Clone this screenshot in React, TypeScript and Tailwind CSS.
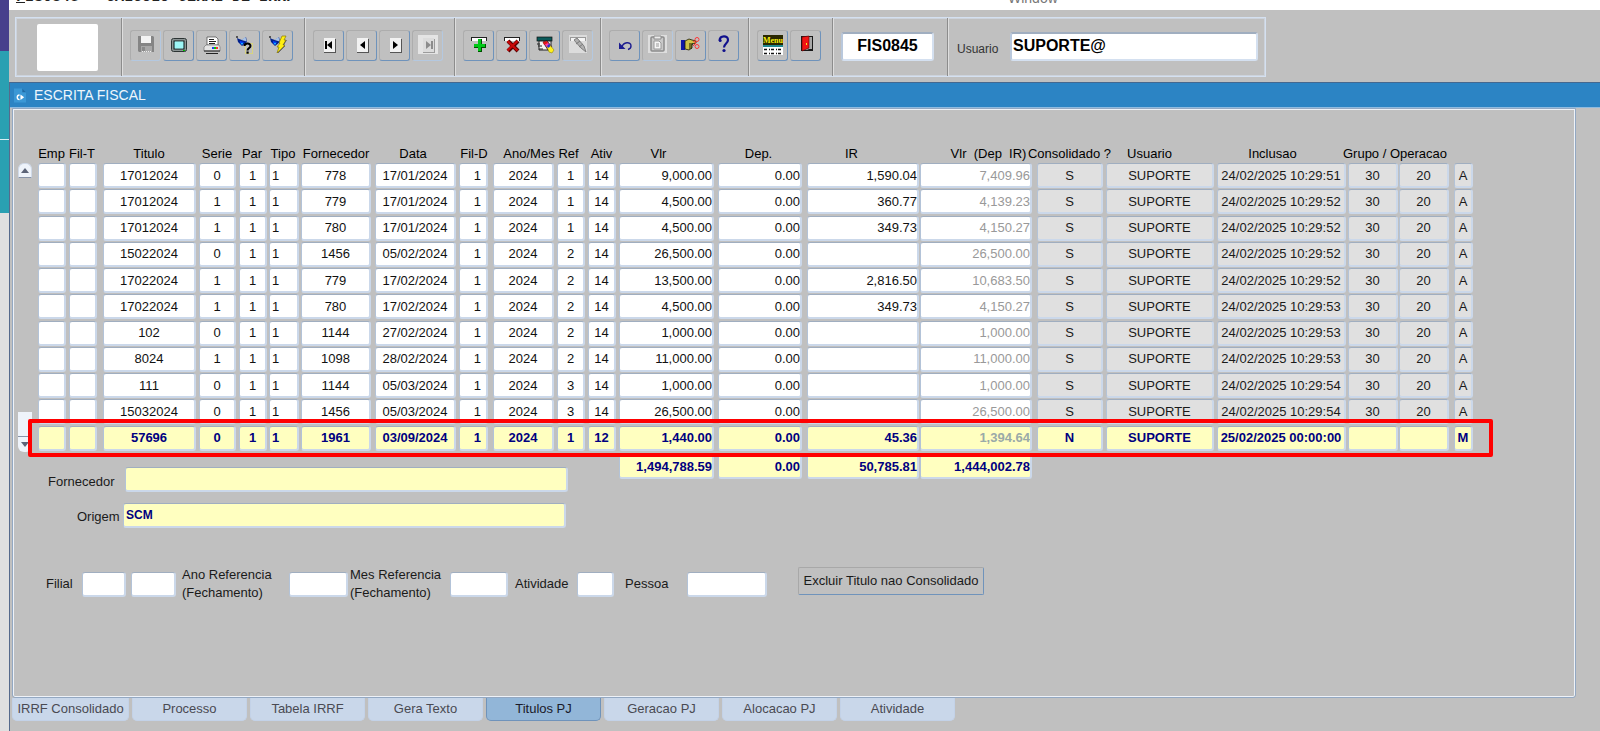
import React from 'react';

type Align = 'center' | 'left' | 'right' | 'inset';

interface Column {
  label: string;
  col: string;
  field: string;
  align: Align;
  head?: string;
  tone?: 'muted' | 'locked';
}

const columns: Column[] = [
  { label: 'Emp', col: 'w-[31px]', field: 'w-[28px]', align: 'center' },
  { label: 'Fil-T', col: 'w-[34px]', field: 'w-[28px]', align: 'center', head: 'pr-2' },
  { label: 'Titulo', col: 'w-[96px]', field: 'w-[93px]', align: 'center' },
  { label: 'Serie', col: 'w-[40px]', field: 'w-[37px]', align: 'center' },
  { label: 'Par', col: 'w-[30px]', field: 'w-[28px]', align: 'center' },
  { label: 'Tipo', col: 'w-[32px]', field: 'w-[30px]', align: 'left' },
  { label: 'Fornecedor', col: 'w-[74px]', field: 'w-[70px]', align: 'center' },
  { label: 'Data', col: 'w-[84px]', field: 'w-[81px]', align: 'center', head: 'pr-2' },
  { label: 'Fil-D', col: 'w-[34px]', field: 'w-[29px]', align: 'inset' },
  { label: 'Ano/Mes', col: 'w-[64px]', field: 'w-[61px]', align: 'center', head: 'pl-2' },
  { label: 'Ref', col: 'w-[31px]', field: 'w-[28px]', align: 'center', head: 'pr-2' },
  { label: 'Ativ', col: 'w-[31px]', field: 'w-[28px]', align: 'center' },
  { label: 'Vlr', col: 'w-[99px]', field: 'w-[95px]', align: 'right', head: 'pr-5' },
  { label: 'Dep.', col: 'w-[89px]', field: 'w-[84px]', align: 'right', head: 'pr-2' },
  { label: 'IR', col: 'w-[113px]', field: 'w-[112px]', align: 'right', head: 'pr-6' },
  { label: 'Vlr  (Dep  IR)', col: 'w-[117px]', field: 'w-[112px]', align: 'right', tone: 'muted', head: 'pl-5' },
  { label: 'Consolidado ?', col: 'w-[69px]', field: 'w-[66px]', align: 'center', tone: 'locked' },
  { label: 'Usuario', col: 'w-[111px]', field: 'w-[108px]', align: 'center', tone: 'locked', head: 'pr-6' },
  { label: 'Inclusao', col: 'w-[131px]', field: 'w-[129px]', align: 'center', tone: 'locked', head: 'pr-5' },
  { label: 'Grupo', col: 'w-[51px]', field: 'w-[50px]', align: 'center', tone: 'locked' },
  { label: 'Operacao', col: 'w-[55px]', field: 'w-[50px]', align: 'center', tone: 'locked' },
  { label: 'Origem', col: 'w-[19px]', field: 'w-[19px]', align: 'center', tone: 'locked' },
];

const base: string[][] = [
  ['17012024', '0', '778', '17/01/2024', '1', '14', '9,000.00', '1,590.04', '7,409.96', '24/02/2025 10:29:51'],
  ['17012024', '1', '779', '17/01/2024', '1', '14', '4,500.00', '360.77', '4,139.23', '24/02/2025 10:29:52'],
  ['17012024', '1', '780', '17/01/2024', '1', '14', '4,500.00', '349.73', '4,150.27', '24/02/2025 10:29:52'],
  ['15022024', '0', '1456', '05/02/2024', '2', '14', '26,500.00', '', '26,500.00', '24/02/2025 10:29:52'],
  ['17022024', '1', '779', '17/02/2024', '2', '14', '13,500.00', '2,816.50', '10,683.50', '24/02/2025 10:29:52'],
  ['17022024', '1', '780', '17/02/2024', '2', '14', '4,500.00', '349.73', '4,150.27', '24/02/2025 10:29:53'],
  ['102', '0', '1144', '27/02/2024', '2', '14', '1,000.00', '', '1,000.00', '24/02/2025 10:29:53'],
  ['8024', '1', '1098', '28/02/2024', '2', '14', '11,000.00', '', '11,000.00', '24/02/2025 10:29:53'],
  ['111', '0', '1144', '05/03/2024', '3', '14', '1,000.00', '', '1,000.00', '24/02/2025 10:29:54'],
  ['15032024', '0', '1456', '05/03/2024', '3', '14', '26,500.00', '', '26,500.00', '24/02/2025 10:29:54'],
  ['57696', '0', '1961', '03/09/2024', '1', '12', '1,440.00', '45.36', '1,394.64', '25/02/2025 00:00:00'],
];

const rows: string[][] = base.map((r, i) => {
  const current = i === base.length - 1;
  return [
    '', '', r[0], r[1], '1', '1', r[2], r[3], '1', '2024', r[4], r[5], r[6], '0.00', r[7], r[8],
    current ? 'N' : 'S', 'SUPORTE', r[9], current ? '' : '30', current ? '' : '20', current ? 'M' : 'A',
  ];
});

const totals = [
  { label: 'Total Vlr', value: '1,494,788.59', field: 'w-[95px]' },
  { label: 'Total Dep.', value: '0.00', field: 'w-[84px]' },
  { label: 'Total IR', value: '50,785.81', field: 'w-[112px]' },
  { label: 'Total Vlr (Dep IR)', value: '1,444,002.78', field: 'w-[112px]' },
];

const tabs = ['IRRF Consolidado', 'Processo', 'Tabela IRRF', 'Gera Texto', 'Titulos PJ', 'Geracao PJ', 'Alocacao PJ', 'Atividade'];

const fieldBase =
  'block h-[25px] rounded-[3px] border border-r-2 border-b-2 border-t-[#a0aec0] border-l-[#b3c3d8] border-r-[#cbd8ea] border-b-[#cbd8ea] outline-none';

const alignClass: Record<Align, string> = {
  center: 'text-center',
  left: 'text-left pl-[2px]',
  right: 'text-right',
  inset: 'text-right pr-[5px]',
};

function cellColor(tone: Column['tone'], current: boolean): string {
  if (current) return tone === 'muted' ? 'bg-[#ffffc0] text-[#9aaaa8] font-bold' : 'bg-[#ffffc0] text-[#000080] font-bold';
  if (tone === 'muted') return 'bg-white text-[#999999]';
  if (tone === 'locked') return 'bg-[#e0e0e0] text-[#1a1a1a]';
  return 'bg-white text-[#111111]';
}

/* ---------- toolbar icons (20 x 20) ---------- */

function Icon({ children }: { children: React.ReactNode }) {
  return (
    <svg width="20" height="20" viewBox="0 0 20 20" aria-hidden="true">
      {children}
    </svg>
  );
}

const SaveIcon = () => (
  <Icon>
    <path d="M2 1h15l1 1v15H3l-1-1z" fill="#858585" />
    <rect x="5" y="1" width="10" height="7" fill="#f4f4f4" />
    <rect x="5" y="11" width="11" height="6" fill="#a8a8a8" />
    <path d="M6 16.500h10" stroke="#ececec" strokeDasharray="1 1" />
    <rect x="6" y="12" width="3" height="4" fill="#8a8a8a" />
  </Icon>
);

const ScreenIcon = () => (
  <Icon>
    <rect x="2.500" y="3.500" width="15" height="13" rx="2" fill="#8b9494" stroke="#2c3434" />
    <rect x="5" y="6" width="10" height="8" fill="#8ff3f3" stroke="#101818" />
    <path d="M7 6v8M9 6v8M11 6v8M13 6v8" stroke="#c8ffff" strokeWidth=".5" />
    <rect x="14" y="15" width="2" height="1" fill="#00c000" />
  </Icon>
);

const PrintIcon = () => (
  <Icon>
    <path d="M5 10V2h9l2 2v6z" fill="#fff" stroke="#444" strokeWidth=".7" />
    <path d="M7 4.500h5M7 6.500h7M7 8.500h6" stroke="#222" />
    <path d="M4 10h13l1 2v4H2v-4z" fill="#e4e4e4" stroke="#666" strokeWidth=".6" />
    <path d="M2 15.500h16v1H2zM4 18h12v1H4z" fill="#222" />
    <rect x="10" y="12" width="2" height="2" fill="#2040ff" />
    <rect x="12" y="12" width="2" height="2" fill="#00d000" />
    <rect x="14" y="12" width="2" height="2" fill="#ff3030" />
  </Icon>
);

const Torch = () => (
  <>
    <path d="M2 3l2 1 3 1 4-3 1 5-5 4-4-4z" fill="#00208c" />
    <path d="M6.500 5l4-3 1.200 4.500z" fill="#a8c4e8" />
    <path d="M5 6l4 1-2 3-2-2z" fill="#0040ff" />
    <path d="M6 8h2l-1 2z" fill="#20d8ff" />
    <path d="M1 1h2v2H1z" fill="#555" />
  </>
);

const EnterQueryIcon = () => (
  <Icon>
    <Torch />
    <path d="M10.500 8.500h7v10h-7z" fill="none" stroke="#f0e840" strokeDasharray="1 1" />
    <path d="M9.500 11c0-3 6-3.500 6 0 0 2-3 2-3 4.500" fill="none" stroke="#000" strokeWidth="2" />
    <rect x="11.500" y="16.500" width="2.200" height="2.200" fill="#000" />
  </Icon>
);

const RunQueryIcon = () => (
  <Icon>
    <Torch />
    <path d="M14 1h4l-2 4h2l-3 5h2l-8 8 2-6H9l3-4h-1z" fill="#ffef10" stroke="#8a7a00" strokeWidth=".7" />
    <path d="M18.500 5l-3 5M17 11l-7 7" stroke="#444" strokeWidth=".7" />
  </Icon>
);

function NavIcon({ bar, dir, off = false }: { bar?: boolean; dir: 'l' | 'r'; off?: boolean }) {
  const ink = off ? '#8c8c8c' : '#000';
  return (
    <Icon>
      {off && <rect x="0" y="0" width="20" height="19" fill="#e4e4e4" />}
      <path d="M5 17h11V4h1v14H5z" fill={off ? '#9c9c9c' : '#555'} />
      <rect x="5" y="3" width="11" height="14" fill={off ? '#dcdcdc' : '#f2f2f2'} />
      {dir === 'l' ? <path d="M13 6v8l-5-4z" fill={ink} /> : <path d="M8 6v8l5-4z" fill={ink} />}
      {bar && <rect x={dir === 'l' ? 6 : 13} y="6" width="2" height="8" fill={ink} />}
    </Icon>
  );
}

const RecordBar = () => (
  <>
    <rect x="2" y="2" width="16" height="4" fill="#222" />
    <rect x="3" y="3" width="14" height="3" fill="#fff" />
  </>
);

const InsertIcon = () => (
  <Icon>
    <RecordBar />
    <path d="M9 4h4v5h4v4h-4v4H9v-4H5V9h4z" fill="#005000" />
    <path d="M9 4h3v5h4v3h-4v4H9v-4H5V9h4z" fill="#00c818" />
  </Icon>
);

const DeleteIcon = () => (
  <Icon>
    <RecordBar />
    <path d="M6 6l10 10M16 6L6 16" stroke="#5a0000" strokeWidth="4" />
    <path d="M5.500 6l10 9.500M15.500 6l-10 9.500" stroke="#c80808" strokeWidth="2.400" />
  </Icon>
);

const ClearRecordIcon = () => (
  <Icon>
    <rect x="2" y="2" width="15" height="4" fill="#0a5a5a" stroke="#111" strokeWidth=".7" />
    <path d="M4 6h12v9H4z" fill="#f4f4f4" stroke="#222" />
    <path d="M2 9h3M3 11h4M4 14h4" stroke="#222" />
    <path d="M8 7l4-1 5 6-4 3z" fill="#ff3fa8" stroke="#111" strokeWidth=".8" />
    <path d="M8 7l4-1 1 2-4 2z" fill="#e01818" />
    <path d="M12 12l3-2 4 5-2 3-3-1z" fill="#fff01c" stroke="#7c7400" strokeWidth=".5" />
    <path d="M12 11l2-2 1.500 2-2 2z" fill="#2430d8" />
  </Icon>
);

const EraseOffIcon = () => (
  <Icon>
    <rect x="1" y="0" width="18" height="18" fill="#dcdcdc" />
    <rect x="2" y="2" width="16" height="4" fill="#9a9a9a" />
    <rect x="3" y="3" width="14" height="3" fill="#f4f4f4" />
    <path d="M6 5l3-2 7 8 2 6-5-4z" fill="#b0b0b0" stroke="#808080" />
    <path d="M8 9l4-3M11 12l4-3" stroke="#777" />
  </Icon>
);

const UndoIcon = () => (
  <Icon>
    <path d="M7 12c1-5 9-6 9-1 0 2-1 3-3 3.500" fill="none" stroke="#1c1c90" strokeWidth="1.400" />
    <path d="M4 7.500v6.500h6.500z" fill="#1c1c90" />
  </Icon>
);

const PasteIcon = () => (
  <Icon>
    <rect x="0" y="0" width="19" height="18" fill="#dedede" />
    <rect x="3" y="2" width="13" height="14" rx="1" fill="#c9c9c9" stroke="#8c8c8c" strokeWidth="1.500" />
    <path d="M6 1h7v3H6z" fill="#ededed" stroke="#8c8c8c" />
    <path d="M6 6h5l2 2v6H6z" fill="#f6f6f6" stroke="#999" />
    <path d="M8 9h3M8 11h3" stroke="#999" />
  </Icon>
);

const HandIcon = () => (
  <Icon>
    <rect x="0" y="5" width="4" height="10" fill="#1018a8" />
    <path d="M4 6l4-2 3 1 4 1v2l-4 1v4l-3 2-4-1z" fill="#cfc34a" stroke="#1a1800" strokeWidth=".8" />
    <path d="M8 9h4M8 11h3M8 13h3" stroke="#1a1800" />
    <circle cx="16" cy="4.500" r="2" fill="none" stroke="#ff3434" />
    <circle cx="16" cy="11.500" r="2" fill="none" stroke="#ff3434" />
    <path d="M12 6l3 2-3 3" fill="none" stroke="#ff3434" />
  </Icon>
);

const HelpIcon = () => (
  <Icon>
    <path d="M5.500 5.500C6 0 14 0 14 5c0 3.500-4 3.500-4 7.500" fill="none" stroke="#10108c" strokeWidth="2.200" />
    <circle cx="6.200" cy="5.500" r="1.500" fill="#10108c" />
    <circle cx="10" cy="15.500" r="1.600" fill="#10108c" />
  </Icon>
);

const MenuIcon = () => (
  <Icon>
    <rect x="0" y="0" width="20" height="10" fill="#2a2800" />
    <text x="10" y="8" textAnchor="middle" fontSize="8" fontWeight="700" fill="#f6ee10" fontFamily="Liberation Serif, serif">
      Menu
    </text>
    <rect x="0" y="10" width="20" height="2" fill="#208890" />
    <rect x="0" y="12" width="20" height="8" fill="#fff" />
    <path d="M1 14.500h18M1 18.500h18" stroke="#111" strokeWidth="1.500" strokeDasharray="3 2 1 1" />
  </Icon>
);

const ExitIcon = () => (
  <Icon>
    <rect x="5.500" y="1.500" width="11" height="14" fill="#a8a8a8" stroke="#181818" />
    <path d="M6 2l7-1v12l-7 3z" fill="#f01414" stroke="#5c0000" strokeWidth=".6" />
    <rect x="10" y="8" width="1" height="2" fill="#ffe820" />
    <path d="M13 14h4v2H9z" fill="#181818" />
  </Icon>
);

interface Tool {
  name: string;
  icon: React.ReactNode;
  off?: boolean;
}

const groups: { width: string; tools: Tool[] }[] = [
  {
    width: 'w-[183px]',
    tools: [
      { name: 'Salvar', icon: <SaveIcon />, off: true },
      { name: 'Tela', icon: <ScreenIcon /> },
      { name: 'Imprimir', icon: <PrintIcon /> },
      { name: 'Entrar consulta', icon: <EnterQueryIcon /> },
      { name: 'Executar consulta', icon: <RunQueryIcon /> },
    ],
  },
  {
    width: 'w-[150px]',
    tools: [
      { name: 'Primeiro', icon: <NavIcon dir="l" bar /> },
      { name: 'Anterior', icon: <NavIcon dir="l" /> },
      { name: 'Proximo', icon: <NavIcon dir="r" /> },
      { name: 'Ultimo', icon: <NavIcon dir="r" bar off />, off: true },
    ],
  },
  {
    width: 'w-[146px]',
    tools: [
      { name: 'Inserir', icon: <InsertIcon /> },
      { name: 'Excluir', icon: <DeleteIcon /> },
      { name: 'Limpar registro', icon: <ClearRecordIcon /> },
      { name: 'Apagar', icon: <EraseOffIcon />, off: true },
    ],
  },
  {
    width: 'w-[148px]',
    tools: [
      { name: 'Desfazer', icon: <UndoIcon /> },
      { name: 'Colar', icon: <PasteIcon />, off: true },
      { name: 'Recortar', icon: <HandIcon /> },
      { name: 'Ajuda', icon: <HelpIcon /> },
    ],
  },
  {
    width: 'w-[84px]',
    tools: [
      { name: 'Menu', icon: <MenuIcon /> },
      { name: 'Sair', icon: <ExitIcon /> },
    ],
  },
];

const divider = 'border-r border-r-[#8c8c8c] shadow-[1px_0_0_#dedede]';

function Toolbar() {
  return (
    <div className="flex h-[60px] w-max items-stretch border border-[#d4e0f0] shadow-[inset_0_0_0_1px_#cdd3dc]">
      <div className={'flex w-[106px] justify-center pt-[6px] pr-[3px] ' + divider}>
        <div className="h-[47px] w-[61px] rounded-[2px] bg-white" />
      </div>
      {groups.map((g) => (
        <div key={g.width} className={'flex items-center gap-[2px] pb-[4px] pl-[8px] ' + g.width + ' ' + divider}>
          {g.tools.map((t) => (
            <button
              key={t.name}
              type="button"
              aria-label={t.name}
              disabled={t.off}
              className={
                'flex h-[31px] w-[31px] items-center justify-center rounded-[3px] border border-t-[#adadad] border-l-[#adadad] ' +
                (t.off ? 'border-r-[#b4c8e0] border-b-[#b4c8e0]' : 'border-r-[#6f93bb] border-b-[#6f93bb]')
              }
            >
              {t.icon}
            </button>
          ))}
        </div>
      ))}
      <div className={'flex w-[115px] items-center pb-[2px] pl-[8px] ' + divider}>
        <input
          aria-label="Programa"
          readOnly
          value="FIS0845"
          className="h-[29px] w-[93px] rounded-[3px] border-2 border-t-[#a0aec0] border-l-[#b9c8dc] border-r-[#d4e0f0] border-b-[#d4e0f0] bg-white text-center text-[16px] font-bold text-black outline-none"
        />
      </div>
      <div className="flex items-center pr-[7px] pb-[2px] pl-[9px]">
        <label htmlFor="usuario" className="w-[53px] pt-[5px] text-[12px] text-[#333333]">
          Usuario
        </label>
        <input
          id="usuario"
          readOnly
          value="SUPORTE@"
          className="h-[29px] w-[248px] rounded-[3px] border-2 border-t-[#a0aec0] border-l-[#b9c8dc] border-r-[#d4e0f0] border-b-[#d4e0f0] bg-white pl-px text-[16px] font-bold text-black outline-none"
        />
      </div>
    </div>
  );
}

function ScrollBar() {
  return (
    <div className="mt-[22px] mr-[6px] flex h-[289px] w-[14px] flex-col justify-between">
      <button type="button" aria-label="Rolar para cima" className="flex h-[15px] items-center justify-center rounded-t-[6px] border border-[#cfd9e8] border-b-[#8793a8] bg-[#eef3fa]">
        <svg width="8" height="5" viewBox="0 0 8 5" aria-hidden="true"><path d="M4 0l4 5H0z" fill="#5c6478" /></svg>
      </button>
      <div>
        <div className="h-[25px] border-b border-b-[#8793a8] bg-[#eef3fa]" />
        <button type="button" aria-label="Rolar para baixo" className="flex h-[15px] w-full items-center justify-center rounded-b-[6px] bg-[#eef3fa]">
          <svg width="8" height="5" viewBox="0 0 8 5" aria-hidden="true"><path d="M0 0h8L4 5z" fill="#5c6478" /></svg>
        </button>
      </div>
    </div>
  );
}

function Grid() {
  return (
    <div className="relative w-max">
      <table className="w-px table-fixed border-collapse text-[13px]">
        <colgroup>
          {columns.map((c) => (
            <col key={c.label} className={c.col} />
          ))}
        </colgroup>
        <thead>
          <tr className="h-[22px]">
            {columns.slice(0, 19).map((c) => (
              <th key={c.label} scope="col" className="p-0 align-bottom font-normal text-black">
                <div className={'flex justify-center leading-[18px] whitespace-pre ' + (c.head ?? 'pr-1')}>{c.label}</div>
              </th>
            ))}
            <th scope="colgroup" colSpan={2} className="p-0 align-bottom font-normal text-black">
              <div className="flex justify-center pr-3 leading-[18px] whitespace-pre">Grupo / Operacao</div>
            </th>
            <td />
          </tr>
        </thead>
        <tbody className="h-[289px]">
          {rows.map((row, r) => (
            <tr key={r} className="h-[26px]">
              {row.map((value, c) => (
                <td key={c} className="p-0 align-top">
                  <input
                    aria-label={columns[c].label + ' ' + (r + 1)}
                    readOnly
                    value={value}
                    className={[fieldBase, columns[c].field, alignClass[columns[c].align], cellColor(columns[c].tone, r === rows.length - 1)].join(' ')}
                  />
                </td>
              ))}
            </tr>
          ))}
        </tbody>
        <tfoot>
          <tr className="h-[27px]">
            <td colSpan={12} className="p-0" />
            {totals.map((t) => (
              <td key={t.label} className="p-0 align-bottom">
                <input
                  aria-label={t.label}
                  readOnly
                  value={t.value}
                  className={[fieldBase, t.field, 'bg-[#ffffc0] text-right font-bold text-[#000080]'].join(' ')}
                />
              </td>
            ))}
            <td colSpan={6} className="p-0" />
          </tr>
        </tfoot>
      </table>
      <div className="pointer-events-none absolute -right-[20px] bottom-[22px] -left-[10px] h-[38px] rounded-[2px] border-4 border-[#ff0000]" />
    </div>
  );
}

function Filters() {
  const box = fieldBase + ' bg-white';
  return (
    <div className="mt-[38px] flex items-center pl-[33px] leading-[18px]">
      <label htmlFor="filial" className="w-[36px]">Filial</label>
      <input id="filial" className={box + ' w-[44px]'} />
      <input aria-label="Filial destino" className={box + ' ml-[5px] w-[45px]'} />
      <label htmlFor="ano" className="ml-[6px] w-[107px]">
        Ano Referencia
        <br />
        (Fechamento)
      </label>
      <input id="ano" className={box + ' w-[59px]'} />
      <label htmlFor="mes" className="ml-[2px] w-[100px]">
        Mes Referencia
        <br />
        (Fechamento)
      </label>
      <input id="mes" className={box + ' w-[58px]'} />
      <label htmlFor="atividade" className="ml-[7px] w-[62px]">Atividade</label>
      <input id="atividade" className={box + ' w-[37px]'} />
      <label htmlFor="pessoa" className="ml-[11px] w-[62px]">Pessoa</label>
      <input id="pessoa" className={box + ' w-[80px]'} />
      <button
        type="button"
        className="mb-[6px] ml-[31px] h-[28px] w-[186px] rounded-[2px] border border-t-[#a8a8a8] border-l-[#a8a8a8] border-r-[#6f93bb] border-b-[#6f93bb] whitespace-nowrap"
      >
        Excluir Titulo nao Consolidado
      </button>
    </div>
  );
}

export default function App() {
  return (
    <div className="flex min-h-screen overflow-hidden bg-[#c0c0c0] font-['Liberation_Sans',Arial,sans-serif] text-[13px] text-[#1a1a1a]">
      <div className="flex w-[9px] shrink-0 flex-col">
        <div className="h-[51px] bg-[#473f8c]" />
        <div className="h-[88px] bg-[#2aa0b2]" />
        <div className="h-px bg-[#d8f0f4]" />
        <div className="h-[73px] bg-[#2aa0b2]" />
        <div className="flex-1 bg-[#e0e0e0]" />
      </div>

      <main className="flex min-w-0 flex-1 flex-col">
        <header className="flex h-[10px] items-end overflow-hidden bg-white pb-[4px] pl-[7px] leading-[16px]">
          <div className="w-[992px] shrink-0 font-['Liberation_Mono',monospace] text-[15px] font-bold whitespace-pre text-[#222222]">
            <u>F</u>IS0845 - CALCULO GERAL DE IRRF
          </div>
          <div className="text-[14px] text-[#777777]">Window</div>
        </header>

        <div className="pt-[7px] pb-[5px] pl-[6px]">
          <Toolbar />
        </div>

        <section className="flex flex-1 flex-col border-l border-l-[#566a8c] pb-[10px]">
          <h1 className="flex h-[26px] shrink-0 items-center gap-[8px] border-t border-b border-t-[#45688f] border-b-[#8fbbe0] bg-[#2c84c4] pl-[4px] text-[14px] text-[#eef6fc]">
            <svg width="12" height="15" viewBox="0 0 13 15" aria-hidden="true">
              <path d="M0 0h9l4 4v11H0z" fill="#3b98d6" />
              <path d="M9 0l4 4H9z" fill="#1f6aa4" />
              <path d="M6 7a2.300 2.300 0 1 0 0 5" fill="none" stroke="#fff" strokeWidth="1.500" />
              <path d="M7 6.500l4 3-4 3z" fill="#fff" />
            </svg>
            ESCRITA FISCAL
          </h1>

          <div className="mr-[24px] ml-[2px] flex-1 rounded-b-[3px] border border-[#93a8c2] shadow-[inset_0_0_0_1px_#eef2f8]">
            <div className="flex pt-[32px] pl-[5px]">
              <ScrollBar />
              <Grid />
            </div>
            <div className="-mt-[12px] flex items-center pl-[35px]">
              <label htmlFor="fornecedor" className="w-[77px] pt-[5px]">Fornecedor</label>
              <input id="fornecedor" className={fieldBase + ' w-[443px] bg-[#ffffc0] font-bold text-[#000080]'} />
            </div>
            <div className="mt-[11px] flex items-center pl-[64px]">
              <label htmlFor="origem" className="w-[46px] pt-[2px]">Origem</label>
              <input
                id="origem"
                readOnly
                value="SCM"
                className={fieldBase + ' w-[443px] bg-[#ffffc0] pl-[2px] text-[12px] font-bold text-[#000080]'}
              />
            </div>
            <Filters />
          </div>

          <nav className="ml-[2px] flex gap-[3px]">
            {tabs.map((t) => (
              <button
                key={t}
                type="button"
                className={
                  'h-[23px] rounded-b-[5px] border-r border-b border-l whitespace-nowrap ' +
                  (t === 'IRRF Consolidado' ? 'w-[117px] ' : 'w-[115px] ') +
                  (t === 'Titulos PJ'
                    ? 'border-[#6f93bb] bg-[#92b6d8] text-[#1a1a2a]'
                    : 'border-[#c3d2e8] bg-[#c9d7ea] text-[#4a4a52]')
                }
              >
                {t}
              </button>
            ))}
          </nav>
        </section>
      </main>
    </div>
  );
}
